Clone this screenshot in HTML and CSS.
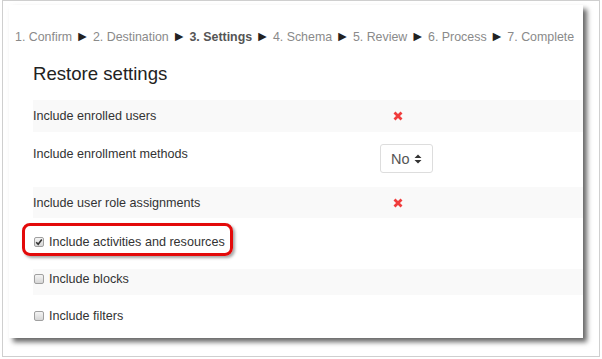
FILE: index.html
```html
<!DOCTYPE html>
<html lang="en">
<head>
    <meta charset="UTF-8">
    <meta name="viewport" content="width=device-width, initial-scale=1.0">
    <title>Restore settings</title>
    <link rel="stylesheet" href="styles.css">
</head>
<body>
    <div class="frame">
        <div class="card">
            <div class="crumbs">
                <span>1. Confirm</span> <span class="arrow">&#9658;</span>
                <span>2. Destination</span> <span class="arrow">&#9658;</span>
                <span class="current">3. Settings</span> <span class="arrow">&#9658;</span>
                <span>4. Schema</span> <span class="arrow">&#9658;</span>
                <span>5. Review</span> <span class="arrow">&#9658;</span>
                <span>6. Process</span> <span class="arrow">&#9658;</span>
                <span>7. Complete</span>
            </div>

            <div class="settings">
                <h2>Restore settings</h2>

                <div class="row stripe row-1">
                    <div class="label">Include enrolled users</div>
                    <div class="value">
                        <svg class="cross" width="10" height="10" viewBox="0 0 10 10"><path d="M1.5 1.5 L8.5 8.5 M8.5 1.5 L1.5 8.5"/></svg>
                    </div>
                </div>

                <div class="row row-2">
                    <div class="label">Include enrollment methods</div>
                    <div class="value">
                        <div class="select">
                            <span>No</span>
                            <svg width="8" height="10" viewBox="0 0 8 10"><path d="M4 0.5 L7.5 4 L0.5 4 Z M0.5 6 L7.5 6 L4 9.5 Z"/></svg>
                        </div>
                    </div>
                </div>

                <div class="row stripe row-3">
                    <div class="label">Include user role assignments</div>
                    <div class="value">
                        <svg class="cross" width="10" height="10" viewBox="0 0 10 10"><path d="M1.5 1.5 L8.5 8.5 M8.5 1.5 L1.5 8.5"/></svg>
                    </div>
                </div>

                <div class="row row-4">
                    <div class="highlight"></div>
                    <label class="check"><span class="box checked"><svg width="8" height="8" viewBox="0 0 8 8"><path d="M1.2 4.2 L3.2 6.2 L6.8 1.6"/></svg></span>Include activities and resources</label>
                </div>

                <div class="row stripe row-5">
                    <label class="check"><span class="box"></span>Include blocks</label>
                </div>

                <div class="row row-6">
                    <label class="check"><span class="box"></span>Include filters</label>
                </div>
            </div>
        </div>
    </div>
</body>
</html>
```

FILE: styles.css
```css
body {
    margin: 0;
    background: #ffffff;
    font-family: 'Liberation Sans', Arial, sans-serif;
    color: #333333;
}
.frame {
    margin: 0 2px;
    height: 357px;
    border: 1px solid #cfcfcf;
    box-sizing: border-box;
    padding: 4px 0 0 6px;
}
.card {
    width: 574px;
    height: 333px;
    background: #ffffff;
    box-shadow: 4px 4px 5px rgba(0, 0, 0, 0.6);
}
.crumbs {
    padding: 23px 0 0 6px;
    font-size: 12.4px;
    line-height: 18px;
    color: #8a8a8a;
    white-space: nowrap;
}
.crumbs .current {
    font-weight: bold;
    color: #555555;
}
.crumbs .arrow {
    color: #222222;
    font-size: 14px;
    line-height: 14px;
}
.settings {
    padding-left: 24px;
}
h2 {
    margin: 17px 0 15px;
    font-size: 18.6px;
    line-height: 22px;
    font-weight: normal;
    color: #222222;
}
.row {
    display: flex;
    align-items: center;
    font-size: 12.6px;
    line-height: 16px;
    position: relative;
}
.stripe {
    background: #f9f9f9;
}
.label {
    width: 347px;
}
.value {
    display: flex;
    align-items: center;
}
.row-1 { height: 32px; }
.row-2 {
    height: 55px;
    align-items: flex-start;
}
.row-2 .label { padding-top: 14px; }
.row-2 .value { padding-top: 12px; }
.row-3 { height: 31px; }
.row-4 {
    height: 51px;
    padding-bottom: 4px;
    box-sizing: border-box;
}
.row-5 {
    height: 26px;
    padding-bottom: 6px;
    box-sizing: border-box;
}
.row-6 {
    height: 43px;
    padding-bottom: 2px;
    box-sizing: border-box;
}
.cross {
    margin-left: 13px;
    fill: none;
    stroke: #f03c3c;
    stroke-width: 2.8;
}
.select {
    display: flex;
    align-items: center;
    justify-content: space-between;
    width: 53px;
    height: 29px;
    box-sizing: border-box;
    padding: 0 10px 0 10px;
    border: 1px solid #dddddd;
    border-radius: 3px;
    font-size: 14.5px;
    color: #555555;
}
.select svg {
    fill: #333333;
}
.check {
    display: flex;
    align-items: center;
}
.box {
    width: 10px;
    height: 10px;
    box-sizing: border-box;
    border: 1px solid #a0a0a0;
    border-radius: 2px;
    background: linear-gradient(#f4f4f4, #d6d6d6);
    margin: 0 5px 0 1px;
    display: flex;
    align-items: center;
    justify-content: center;
}
.box svg {
    fill: none;
    stroke: #333333;
    stroke-width: 1.6;
}
.highlight {
    position: absolute;
    left: -11px;
    top: 5px;
    width: 211px;
    height: 33px;
    border: 3px solid #e30a0a;
    border-radius: 8px;
    box-sizing: border-box;
    box-shadow: 2px 2px 3px rgba(0, 0, 0, 0.35);
}
```
